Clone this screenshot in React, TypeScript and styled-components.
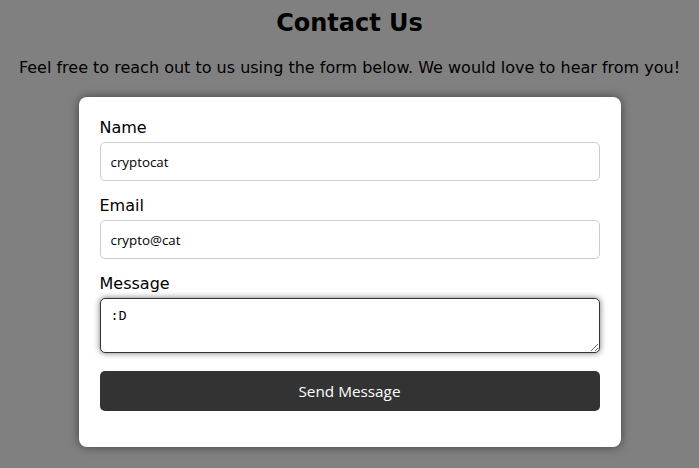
import React, { useEffect, useRef } from "react";
import styled, { createGlobalStyle } from "styled-components";

const GlobalStyle = createGlobalStyle`
  html, body {
    margin: 0;
    padding: 0;
    background: #808080;
  }
  body {
    font-family: "DejaVu Sans", sans-serif;
    color: #000;
  }
`;

const Page = styled.div`
  display: flex;
  flex-direction: column;
  align-items: center;
  padding-top: 9px;
  min-height: 468px;
  box-sizing: border-box;
`;

const Title = styled.h1`
  margin: 0;
  font-size: 24px;
  font-weight: bold;
  line-height: 28px;
`;

const Intro = styled.p`
  margin: 21px 0 0;
  font-size: 16px;
  line-height: 19px;
`;

const Card = styled.form`
  width: 542px;
  box-sizing: border-box;
  margin-top: 20px;
  padding: 21px 21px 20px;
  background: #fff;
  border-radius: 8px;
  box-shadow: 0 0 10px rgba(0, 0, 0, 0.5);
  display: flex;
  flex-direction: column;
`;

const Label = styled.label`
  display: block;
  font-size: 16px;
  line-height: 19px;
  margin-bottom: 5px;
`;

const Input = styled.input`
  box-sizing: border-box;
  width: 100%;
  height: 39px;
  padding: 10px;
  margin-bottom: 15px;
  border: 1px solid #ccc;
  border-radius: 5px;
  font-family: "Open Sans", sans-serif;
  font-size: 13.33px;
  color: #000;
  outline: none;
`;

const TextArea = styled.textarea`
  box-sizing: border-box;
  width: 100%;
  height: 55px;
  padding: 10px;
  margin-bottom: 18px;
  border: 1px solid #333;
  border-radius: 5px;
  font-family: "Liberation Mono", monospace;
  font-size: 13.33px;
  line-height: 15px;
  color: #000;
  caret-color: #000;
  outline: none;
  box-shadow: 0 0 6px rgba(0, 0, 0, 0.55);
  resize: vertical;
`;

const SendButton = styled.button`
  width: 100%;
  height: 40px;
  border: none;
  border-radius: 5px;
  background: #333;
  color: #fff;
  font-family: "Open Sans", sans-serif;
  font-size: 15.3px;
  cursor: pointer;
  margin-bottom: 16px;
`;

export default function App() {
  const msgRef = useRef<HTMLTextAreaElement>(null);

  useEffect(() => {
    const el = msgRef.current;
    if (el) {
      el.focus();
      el.setSelectionRange(el.value.length, el.value.length);
    }
  }, []);

  return (
    <Page>
      <GlobalStyle />
      <Title>Contact Us</Title>
      <Intro>Feel free to reach out to us using the form below. We would love to hear from you!</Intro>
      <Card onSubmit={(e) => e.preventDefault()}>
        <Label htmlFor="name">Name</Label>
        <Input id="name" type="text" defaultValue="cryptocat" />
        <Label htmlFor="email">Email</Label>
        <Input id="email" type="email" defaultValue="crypto@cat" />
        <Label htmlFor="message">Message</Label>
        <TextArea id="message" ref={msgRef} defaultValue=":D" autoFocus />
        <SendButton type="submit">Send Message</SendButton>
      </Card>
    </Page>
  );
}
